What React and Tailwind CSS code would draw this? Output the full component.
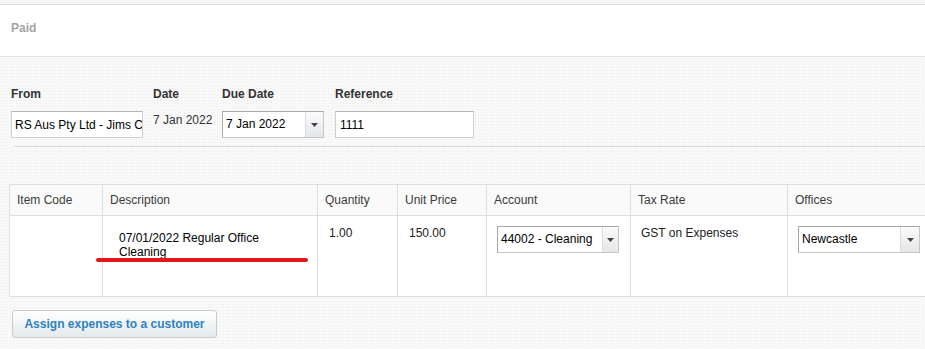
import React from "react";

const Arrow = () => (
  <svg width="7" height="4" viewBox="0 0 7 4">
    <path d="M0 0h7L3.5 4z" fill="#4c3d52" />
  </svg>
);

const Select = ({ value, className, btnClass }) => (
  <div
    className={`flex h-[27px] border border-[#c6c6c6] border-t-[#a8a8a8] border-l-[#a8a8a8] bg-white ${className}`}
  >
    <div className="flex-1 overflow-hidden whitespace-nowrap pl-[3px] leading-[25px] text-black">
      {value}
    </div>
    <div
      className={`flex items-center justify-center border-l border-[#dcdcdc] bg-linear-to-b from-[#fbfbfb] to-[#e4e6e8] ${btnClass}`}
    >
      <Arrow />
    </div>
  </div>
);

const headers = [
  "Item Code",
  "Description",
  "Quantity",
  "Unit Price",
  "Account",
  "Tax Rate",
  "Offices",
];

export default function App() {
  return (
    <div className="w-[925px] h-[349px] overflow-hidden bg-[#f8f8f8] font-['Liberation_Sans',Arial,sans-serif] text-[12px] text-[#222]">
      <div className="h-[5px] bg-[#f5f5f5] border-b border-[#dedede]" />
      <div className="h-[52px] bg-white border-b border-[#e2e2e2] pl-[11px] pt-[14px]">
        <span className="font-bold text-[#a3a3a3]">Paid</span>
      </div>

      <div className="bg-[#f9f9f9] bg-[radial-gradient(circle,#ececec_0.8px,transparent_0.9px)] bg-[length:3px_3px] pt-[30px] pb-[40px]">
        {/* header fields */}
        <div className="flex pl-[11px] leading-[14px]">
          <div className="w-[142px]">
            <div className="font-bold text-[#333] mb-[10px]">From</div>
            <input
              readOnly
              value="RS Aus Pty Ltd - Jims Cleaning"
              className="block w-[132px] h-[27px] border border-[#cfcfcf] border-t-[#b5b5b5] bg-white pl-[3px] text-black outline-none"
            />
          </div>
          <div className="w-[69px]">
            <div className="font-bold text-[#333] mb-[10px]">Date</div>
            <div className="pt-[2px] text-[#333]">7 Jan 2022</div>
          </div>
          <div className="w-[113px]">
            <div className="font-bold text-[#333] mb-[10px]">Due Date</div>
            <Select value="7 Jan 2022" className="w-[102px]" btnClass="w-[18px]" />
          </div>
          <div>
            <div className="font-bold text-[#333] mb-[10px]">Reference</div>
            <input
              readOnly
              value="1111"
              className="block w-[139px] h-[27px] border border-[#cfcfcf] border-t-[#b5b5b5] bg-white pl-[4px] text-black outline-none"
            />
          </div>
        </div>

        <div className="ml-[14px] mt-[8px] border-t border-[#dcdcdc]" />

        {/* line items */}
        <div className="pl-[9px] mt-[37px]">
          <table className="table-fixed border-collapse w-[928px]">
            <colgroup>
              <col className="w-[93px]" />
              <col className="w-[215px]" />
              <col className="w-[80px]" />
              <col className="w-[89px]" />
              <col className="w-[144px]" />
              <col className="w-[157px]" />
              <col className="w-[150px]" />
            </colgroup>
            <thead>
              <tr className="h-[31px] bg-[#fafafa]">
                {headers.map((h) => (
                  <th
                    key={h}
                    className="border border-[#dedede] pl-[7px] text-left font-normal text-[#3a3a3a] align-middle"
                  >
                    {h}
                  </th>
                ))}
              </tr>
            </thead>
            <tbody>
              <tr className="h-[81px] bg-white align-top text-[#222]">
                <td className="border border-[#dedede]" />
                <td className="relative border border-[#dedede] pl-[16px] pt-[15px]">
                  <div className="w-[180px] leading-[14px] text-black">
                    07/01/2022 Regular Office Cleaning
                  </div>
                  <div className="absolute left-[-7px] top-[42px] w-[212px] h-[4px] rounded-full bg-[#e4161c]" />
                </td>
                <td className="border border-[#dedede] pl-[11px] pt-[10px] leading-[14px]">
                  1.00
                </td>
                <td className="border border-[#dedede] pl-[11px] pt-[10px] leading-[14px]">
                  150.00
                </td>
                <td className="border border-[#dedede] pl-[10px] pt-[10px]">
                  <Select
                    value="44002 - Cleaning"
                    className="w-[122px]"
                    btnClass="w-[16px]"
                  />
                </td>
                <td className="border border-[#dedede] pl-[10px] pt-[10px] leading-[14px]">
                  GST on Expenses
                </td>
                <td className="border border-[#dedede] pl-[10px] pt-[10px]">
                  <Select
                    value="Newcastle"
                    className="w-[122px]"
                    btnClass="w-[19px]"
                  />
                </td>
              </tr>
            </tbody>
          </table>
        </div>

        <div className="pl-[12px] mt-[13px]">
          <button className="w-[205px] h-[28px] rounded-[3px] border border-[#cacaca] bg-linear-to-b from-white to-[#e4eaee] font-bold text-[#2e82c0]">
            Assign expenses to a customer
          </button>
        </div>
      </div>
    </div>
  );
}
